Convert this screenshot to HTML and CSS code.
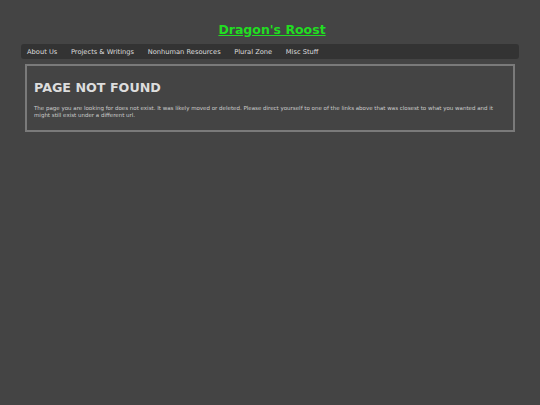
FILE: index.html
```html
<!DOCTYPE html>
<html>
<head>
<meta charset="utf-8">
<title>Dragon's Roost</title>
<link rel="stylesheet" href="styles.css">
</head>
<body>
<div class="wrap">
  <header class="site-header">
    <a class="site-title" href="#">Dragon's Roost</a>
  </header>
  <nav class="nav">
    <a href="#">About Us</a>
    <a href="#">Projects &amp; Writings</a>
    <a href="#">Nonhuman Resources</a>
    <a href="#">Plural Zone</a>
    <a href="#">Misc Stuff</a>
  </nav>
  <main class="box">
    <h1 class="box-title">PAGE NOT FOUND</h1>
    <p class="box-text">The page you are looking for does not exist. It was likely moved or deleted. Please direct yourself to one of the links above that was closest to what you wanted and it might still exist under a different url.</p>
  </main>
</div>
</body>
</html>
```

FILE: styles.css
```css
html, body {
  margin: 0;
  padding: 0;
  background: #444444;
  color: #dddddd;
  font-family: "DejaVu Sans", Verdana, sans-serif;
}
.wrap {
  width: 498px;
  margin: 0 auto;
}
.site-header {
  text-align: center;
  padding-top: 19px;
  height: 25px;
  box-sizing: content-box;
}
.site-title {
  color: #22dd22;
  font-weight: bold;
  font-size: 12.5px;
  text-decoration: underline;
  margin-left: 4px;
}
.nav {
  display: flex;
  background: #333333;
  border-radius: 3px;
  height: 15px;
  align-items: center;
}
.nav a {
  color: #dddddd;
  text-decoration: none;
  font-size: 6.7px;
  padding: 0 6.8px;
}
.nav a:first-child {
  padding-left: 6px;
}
.box {
  margin: 5px 4px 0 4px;
  border: 2px solid #7a7a7a;
  padding: 14px 7px 12px 7px;
}
.box-title {
  margin: 0 0 9px 0;
  font-size: 12.7px;
  font-weight: bold;
  color: #dddddd;
  line-height: 16px;
}
.box-text {
  margin: 0;
  font-size: 5.5px;
  line-height: 6.5px;
  color: #cccccc;
}
```
